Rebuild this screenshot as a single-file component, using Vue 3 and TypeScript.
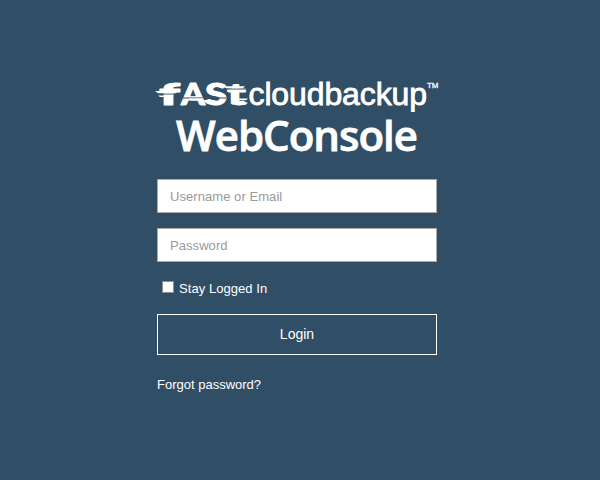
<script setup lang="ts">
import { ref } from 'vue'

const username = ref('')
const password = ref('')
const stayLoggedIn = ref(false)
</script>

<template>
  <main class="page">
    <form class="login" @submit.prevent>
      <svg class="brand" viewBox="0 0 288 38" role="img" aria-label="FAST cloudbackup">
        <text class="fast" y="30.5">
          <tspan x="4" textLength="21" lengthAdjust="spacingAndGlyphs">f</tspan><tspan x="26" textLength="24" lengthAdjust="spacingAndGlyphs">A</tspan><tspan x="50" textLength="22" lengthAdjust="spacingAndGlyphs">S</tspan><tspan x="72" textLength="19" lengthAdjust="spacingAndGlyphs">t</tspan>
        </text>
        <g class="cuts">
          <path d="M4 19.6h21v1H4zM26 23.5h24v1H26zM51 23.5h20v1H51zM72 14.5h20v1H72z" />
        </g>
        <g class="streaks">
          <path d="M0 17h23l-2 2.2H3zM3 21.5h16l-2 1.5H5zM34 24.5h15l-2 2H36zM48 26h12v2H50zM68 12.2h22l-2 2H71zM79 24.5h14l-2 1.8H79zM75 28.5h18l-2 2H77z" />
        </g>
        <text class="cloud" x="93.5" y="30.5" textLength="178.5">cloudbackup</text>
        <text class="tm" x="272" y="14" textLength="11.5" lengthAdjust="spacingAndGlyphs">TM</text>
      </svg>
      <h1 class="title">WebConsole</h1>
      <input v-model="username" class="field" type="text" placeholder="Username or Email" />
      <input v-model="password" class="field" type="password" placeholder="Password" />
      <label class="stay">
        <input v-model="stayLoggedIn" class="check" type="checkbox" />
        <span>Stay Logged In</span>
      </label>
      <button class="submit" type="submit">Login</button>
      <a class="forgot" href="#">Forgot password?</a>
    </form>
  </main>
</template>

<style>
body {
  background: #304e65;
}
</style>

<style scoped>
.page {
  box-sizing: border-box;
  height: 480px;
  padding: 74px 0 0 157px;
  background: #304e65;
  color: #fff;
  font: 13px/18px "Liberation Sans", Arial, sans-serif;
}
.login {
  display: flex;
  flex-direction: column;
  width: 280px;
}
.brand {
  width: 288px;
  height: 38px;
  margin-left: -2px;
  fill: #fff;
}
.fast {
  font: 900 31px Lato, sans-serif;
  stroke: #fff;
  stroke-width: 0.9px;
  stroke-linejoin: round;
}
.cuts {
  fill: #304e65;
}
.cloud {
  font: 32px "Liberation Sans", sans-serif;
  stroke: #fff;
  stroke-width: 0.8px;
}
.tm {
  font: 8px "Liberation Sans", sans-serif;
  stroke: #fff;
  stroke-width: 0.3px;
}
.title {
  height: 46px;
  margin: 1px 0 20px 19px;
  font: 600 42px/44px "Open Sans", sans-serif;
  letter-spacing: -1px;
  white-space: nowrap;
  -webkit-text-stroke: 0.8px #fff;
}
.field {
  box-sizing: border-box;
  width: 280px;
  height: 34px;
  margin: 0 0 15px;
  padding: 0 12px;
  border: 1px solid #a9a9a9;
  border-radius: 0;
  background: #fff;
  color: #555;
  font: inherit;
  letter-spacing: 0.06px;
  outline: none;
}
.field::placeholder {
  color: #999;
  opacity: 1;
}
.stay {
  display: flex;
  align-items: center;
  gap: 5px;
  height: 18px;
  margin: 3px 0 16px 5px;
  letter-spacing: 0.06px;
}
.check {
  appearance: none;
  box-sizing: border-box;
  width: 12px;
  height: 12px;
  margin: 0 0 4px;
  border: 1px solid #8e8e8e;
  background: #fff;
}
.check:checked {
  background: #6a8aa5;
}
.submit {
  box-sizing: border-box;
  height: 41px;
  padding: 0 0 2px;
  border: 1px solid #fff;
  background: transparent;
  color: #fff;
  font: 14px/20px "Liberation Sans", Arial, sans-serif;
}
.forgot {
  align-self: flex-start;
  margin-top: 21px;
  color: #fff;
  text-decoration: none;
}
</style>
